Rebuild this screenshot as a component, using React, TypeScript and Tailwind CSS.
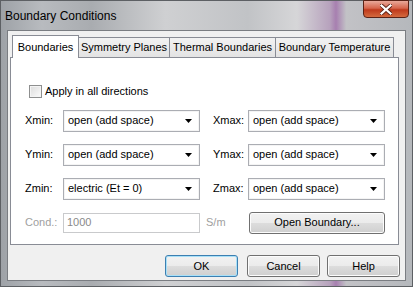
import React, { useState } from 'react';

const font = { fontFamily: '"Liberation Sans", Arial, sans-serif' };

const tabs = [
    { name: 'Boundaries', w: 'w-[67px]' },
    { name: 'Symmetry Planes', w: 'w-[91px]' },
    { name: 'Thermal Boundaries', w: 'w-[106px]' },
    { name: 'Boundary Temperature', w: 'w-[118px]' },
];

const Combo = ({ value }: { value: string }) => (
    <div className="w-[137px] h-[22px] border border-[#abadb3] bg-white flex items-center justify-between pl-[4px] pr-[7px] shadow-[inset_0_0_0_1px_#f4f4f4]">
        <span className="text-[11px] text-black">{value}</span>
        <svg width="7" height="4" viewBox="0 0 7 4">
            <path d="M0 0H7L3.5 4Z" fill="#000" />
        </svg>
    </div>
);

const Btn = ({ label, w, primary }: { label: string; w: string; primary?: boolean }) => (
    <button
        type="button"
        className={`${w} h-[22px] rounded-[3px] border text-[11px] text-black bg-[linear-gradient(#f2f2f2_0%,#ebebeb_50%,#dddddd_50%,#cfcfcf_100%)] ${
            primary ? 'border-[#3c7fb1] shadow-[inset_0_0_0_1px_#a8e0f8]' : 'border-[#707070] shadow-[inset_0_0_0_1px_#fcfcfc]'
        }`}
    >
        {label}
    </button>
);

const Row = ({ minLabel, minValue, maxLabel, maxValue }: { minLabel: string; minValue: string; maxLabel: string; maxValue: string }) => (
    <div className="flex items-center">
        <span className="w-[38px] text-[11px] text-black">{minLabel}</span>
        <Combo value={minValue} />
        <span className="w-[35px] ml-[13px] text-[11px] text-black">{maxLabel}</span>
        <Combo value={maxValue} />
    </div>
);

export default function App() {
    const [active, setActive] = useState(0);
    const [applyAll, setApplyAll] = useState(false);

    return (
        <div
            style={font}
            className="w-[413px] h-[287px] flex flex-col border border-[#5d6064] bg-[linear-gradient(90deg,#9ea2a7_0%,#b8bbbf_10%,#a9acb0_22%,#cfd0d2_40%,#c1c3c6_60%,#d6d6d8_72%,#b7a2bd_80%,#a77fb0_81.5%,#c2c2c6_84%,#b5b8bc_100%)]"
        >
            <div className="h-[29px] flex items-start justify-between pl-[4px] pr-[3px]">
                <span className="mt-[6px] text-[12px] text-black">Boundary Conditions</span>
                <div className="w-[46px] h-[18px] -mt-[1px] rounded-b-[4px] border border-[#5a2216] bg-[linear-gradient(#e9a99a_0%,#d6654c_45%,#bf3a1c_55%,#d46a3e_100%)] flex items-center justify-center">
                    <svg width="12" height="11" viewBox="0 0 12 11">
                        <path d="M1.5 1.5L10.5 9.5M10.5 1.5L1.5 9.5" stroke="#5a2216" strokeWidth="4" strokeLinecap="square" />
                        <path d="M1.5 1.5L10.5 9.5M10.5 1.5L1.5 9.5" stroke="#fff" strokeWidth="2.2" strokeLinecap="square" />
                    </svg>
                </div>
            </div>

            <div className="mx-[6px] mb-[5px] flex-1 bg-[#f0f0f0] border border-[#7a7d82] flex flex-col">
                <div className="flex pl-[4px] pt-[3px] items-end h-[26px]">
                    {tabs.map((t, i) =>
                        i === active ? (
                            <button
                                key={t.name}
                                onClick={() => setActive(i)}
                                className={`${t.w} h-[23px] -mb-px z-10 bg-white border border-b-0 border-[#898c95] text-[11px] text-black whitespace-nowrap`}
                            >
                                {t.name}
                            </button>
                        ) : (
                            <button
                                key={t.name}
                                onClick={() => setActive(i)}
                                className={`${t.w} h-[20px] bg-[linear-gradient(#f2f2f2,#e3e3e3)] border border-b-0 border-l-0 border-[#898c95] text-[11px] text-black whitespace-nowrap`}
                            >
                                {t.name}
                            </button>
                        )
                    )}
                </div>

                <div className="ml-[2px] w-[389px] h-[188px] bg-white border border-[#898c95] pl-[14px] pt-[25px]">
                    <label className="flex items-center gap-[3px] ml-[4px]">
                        <input
                            type="checkbox"
                            checked={applyAll}
                            onChange={e => setApplyAll(e.target.checked)}
                            className="w-[13px] h-[13px] m-0 appearance-none border border-[#8e8f8f] bg-[linear-gradient(135deg,#dcdcdc,#fbfbfb)] shadow-[inset_0_0_0_1px_#f4f4f4]"
                        />
                        <span className="text-[11px] text-black">Apply in all directions</span>
                    </label>

                    <div className="mt-[10px] flex flex-col gap-[12px]">
                        <Row minLabel="Xmin:" minValue="open (add space)" maxLabel="Xmax:" maxValue="open (add space)" />
                        <Row minLabel="Ymin:" minValue="open (add space)" maxLabel="Ymax:" maxValue="open (add space)" />
                        <Row minLabel="Zmin:" minValue="electric (Et = 0)" maxLabel="Zmax:" maxValue="open (add space)" />
                    </div>

                    <div className="mt-[12px] flex items-center">
                        <span className="w-[38px] text-[11px] text-[#a0a0a0]">Cond.:</span>
                        <div className="w-[137px] h-[20px] border border-[#c9cacc] bg-white flex items-center pl-[3px]">
                            <span className="text-[11px] text-[#8a8a8a]">1000</span>
                        </div>
                        <span className="ml-[6px] w-[43px] text-[11px] text-[#a0a0a0]">S/m</span>
                        <Btn label="Open Boundary..." w="w-[136px]" />
                    </div>
                </div>

                <div className="flex justify-end pr-[5px] mt-[10px]">
                    <Btn label="OK" w="w-[73px]" primary />
                    <div className="w-[9px]" />
                    <Btn label="Cancel" w="w-[73px]" />
                    <div className="w-[7px]" />
                    <Btn label="Help" w="w-[73px]" />
                </div>
            </div>
        </div>
    );
}
